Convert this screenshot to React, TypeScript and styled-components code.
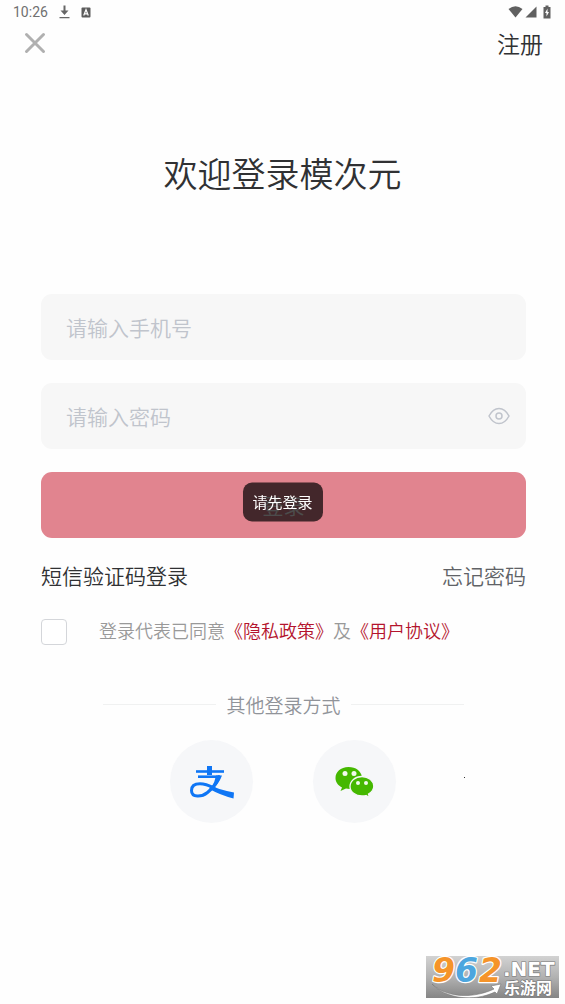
import React, { useState } from "react";
import styled, { createGlobalStyle } from "styled-components";

const GlobalStyle = createGlobalStyle`
  *, *::before, *::after { box-sizing: border-box; }
  body {
    margin: 0;
    background: #fefefe;
    color: #303133;
    font-family: "Noto Sans CJK SC", sans-serif;
    font-weight: 350;
  }
  button, input { font-family: inherit; font-weight: inherit; }
`;

const Page = styled.main`
  position: relative;
  min-height: 100vh;
  display: flex;
  flex-direction: column;
`;

const StatusBar = styled.div`
  height: 24px;
  padding: 0 13px;
  display: flex;
  align-items: center;
  justify-content: space-between;
`;

const StatusGroup = styled.div<{ $gap: number }>`
  display: flex;
  align-items: center;
  gap: ${(p) => p.$gap}px;
`;

const Clock = styled.time`
  font: 400 14px/24px Roboto, sans-serif;
  color: #707070;
`;

const NavBar = styled.nav`
  height: 38px;
  padding: 0 22px 0 24px;
  display: flex;
  align-items: center;
  justify-content: space-between;
`;

const PlainButton = styled.button`
  padding: 0;
  border: 0;
  background: none;
  display: flex;
  cursor: pointer;
`;

const TextLink = styled.a<{ $size: number; $color: string }>`
  font-size: ${(p) => p.$size}px;
  color: ${(p) => p.$color};
  text-decoration: none;
`;

const Title = styled.h1`
  margin: 86px 0 96px;
  text-align: center;
  font-size: 34px;
  line-height: 50px;
  font-weight: inherit;
`;

const Form = styled.form`
  padding: 0 39px 0 41px;
  display: flex;
  flex-direction: column;
`;

const Field = styled.label`
  height: 66px;
  margin-bottom: 23px;
  padding: 0 16px 0 25px;
  display: flex;
  align-items: center;
  border-radius: 11px;
  background: #f7f7f7;
`;

const TextInput = styled.input`
  flex: 1;
  min-width: 0;
  height: 40px;
  padding: 0;
  border: 0;
  outline: 0;
  background: none;
  color: #303133;
  font-size: 21px;
  &::placeholder { color: #c0c4cc; opacity: 1; }
`;

const SubmitButton = styled.button`
  height: 66px;
  border: 0;
  border-radius: 11px;
  background: #e1848f;
  color: #fff;
  font-size: 21px;
  cursor: pointer;
`;

const LinkRow = styled.div`
  margin-top: 21px;
  height: 32px;
  display: flex;
  align-items: center;
  justify-content: space-between;
`;

const Consent = styled.div`
  margin-top: 25px;
  height: 32px;
  display: flex;
  align-items: center;
  gap: 32px;
  white-space: nowrap;
  font-size: 18px;
  color: #999;
`;

const ConsentText = styled.div`
  padding-bottom: 4px;
`;

const CheckBox = styled.input`
  appearance: none;
  flex: none;
  width: 26px;
  height: 26px;
  margin: 0;
  border: 1px solid #d4d6da;
  border-radius: 4px;
  background: #fff;
  &:checked { background: #b4142d; }
`;

const Divider = styled.div`
  margin-top: 40px;
  padding: 0 39px 0 41px;
  height: 32px;
  display: flex;
  align-items: center;
  justify-content: center;
  gap: 10px;
  font-size: 19px;
  color: #909399;
  &::before, &::after {
    content: "";
    flex: 0 1 113px;
    height: 1px;
    background: #f0f1f1;
  }
`;

const Methods = styled.div`
  position: relative;
  align-self: center;
  margin-top: 20px;
  display: flex;
  gap: 60px;
`;

const MethodButton = styled.button`
  width: 83px;
  height: 83px;
  padding: 0;
  border: 0;
  border-radius: 50%;
  background: #f6f7f9;
  display: grid;
  place-items: center;
  cursor: pointer;
`;

const Speck = styled.span`
  position: absolute;
  top: 37px;
  left: 294px;
  width: 1px;
  height: 1px;
  background: #333;
`;

const Toast = styled.div`
  position: fixed;
  top: 50%;
  left: 50%;
  transform: translate(-50%, -50%);
  padding: 7px 10px 9px;
  border-radius: 9px;
  background: rgba(0, 0, 0, 0.7);
  color: #fff;
  font-size: 15px;
  font-weight: 400;
  line-height: 23px;
  white-space: nowrap;
`;

const Watermark = styled.div`
  position: absolute;
  right: 6px;
  bottom: 6px;
  display: flex;
`;

function SiteLogo() {
  return (
    <svg width="133" height="52" viewBox="0 -8 133 52" role="img" aria-label="962.NET 乐游网">
      <defs>
        <linearGradient id="plate" x1="0" y1="0" x2="0" y2="1">
          <stop offset="0" stopColor="#d2d2d2" />
          <stop offset="0.5" stopColor="#b2b2b2" />
          <stop offset="1" stopColor="#858585" />
        </linearGradient>
      </defs>
      <rect y="2" width="133" height="42" fill="url(#plate)" />
      <path d="M6 30C22 45 49 44 68 35L65 32L75 30L71 40L69 38C48 48 20 45 6 30Z" fill="#fff" stroke="#777" strokeWidth="0.6" />
      <g
        fontFamily={'"DejaVu Sans", sans-serif'}
        fontWeight="700"
        fontStyle="italic"
        fontSize="33"
        stroke="#fff"
        strokeWidth="2.4"
        paintOrder="stroke"
        strokeLinejoin="round"
      >
        <text x="6" y="28" fill="#f5942a">9</text>
        <text x="29" y="28" fill="#4da6de">6</text>
        <text x="53" y="28" fill="#f5942a">2</text>
      </g>
      <g fill="#fff" stroke="#777" strokeWidth="1.2" paintOrder="stroke" fontWeight="700">
        <text x="77" y="22" fontFamily={'"DejaVu Sans", sans-serif'} fontSize="20">.NET</text>
        <text x="78" y="40" fontFamily={'"Noto Sans CJK SC", sans-serif'} fontSize="16">乐游网</text>
      </g>
    </svg>
  );
}

function AlipayMark() {
  return (
    <svg width="45" height="34" viewBox="1 0 45 34" aria-hidden="true">
      <g fill="none" stroke="#0f76f5">
        <path d="M21.500 1V10" strokeWidth="5" />
        <path d="M8 6.500H36" strokeWidth="2.600" />
        <path d="M10 11.700H32" strokeWidth="2.600" />
        <path d="M31.500 10.500C29.500 17.500 25 23 19.500 27.500C14 32 3.500 33 3.500 25.500C3.500 21 7 18.800 12 18.800C18 18.800 22 21 27 23.500" strokeWidth="3" />
      </g>
      <path d="M28 10.500H34C32 15.500 30 18.500 27.500 21.500L23 23Q27 17 28 10.500ZM22 20Q31 25 46 27.500L45.500 33.500Q32 30 21.500 24Z" fill="#0f76f5" />
    </svg>
  );
}

function WeChatMark() {
  return (
    <svg width="39" height="32" viewBox="1 0 39 32" aria-hidden="true">
      <path d="M14.500 1C6.500 1 1.500 6 1.500 12C1.500 16 3.500 19 8 21.500L6.500 25L12 22.500Q15 23.300 18 22.800C28 22 28 12 28 11C27 5 22 1 14.500 1Z" fill="#45b800" />
      <path d="M28 10.500C21 10.500 16 15 16 20.500C16 26 21.500 30 28 30Q30.500 30 32 29.500L35.500 31.500L34.500 28Q39.800 25 39.800 20C39.500 15 34.500 10.500 28 10.500Z" fill="#45b800" stroke="#f6f7f9" strokeWidth="1.300" />
      <g fill="#f1faec">
        <circle cx="11" cy="7.500" r="2.500" />
        <circle cx="20" cy="7.500" r="2.500" />
        <circle cx="24" cy="17" r="2" />
        <circle cx="32" cy="17" r="2" />
      </g>
    </svg>
  );
}

export default function App() {
  const [visible, setVisible] = useState(false);
  return (
    <Page>
      <GlobalStyle />
      <StatusBar>
        <StatusGroup $gap={11}>
          <Clock>10:26</Clock>
          <svg width="11" height="14" viewBox="0 0 11 14" aria-hidden="true">
            <path d="M4.500 0.500H6.500V5.500H9.500L5.500 10L1.500 5.500H4.500ZM0.500 12H10.500V13.300H0.500Z" fill="#666" />
          </svg>
          <svg width="10" height="11" viewBox="0 0 10 11" aria-hidden="true">
            <rect x="0.500" y="0.500" width="9" height="10" rx="1" fill="#5c5c5c" />
            <path d="M2.700 8.500L5 2.700L7.300 8.500M3.500 6.800H6.500" fill="none" stroke="#fff" strokeWidth="1.200" />
          </svg>
        </StatusGroup>
        <StatusGroup $gap={2}>
          <svg width="15" height="12" viewBox="0 0 15 12" aria-hidden="true">
            <path d="M0.500 3Q7.500 -2.500 14.500 3L7.500 11.500Z" fill="#606060" />
          </svg>
          <svg width="12" height="12" viewBox="0 0 12 12" aria-hidden="true">
            <path d="M11.500 0.500V11.500H0.500Z" fill="#606060" />
          </svg>
          <svg width="13" height="14" viewBox="0 0 13 14" aria-hidden="true">
            <path d="M6.500 0.500H9.500V2H11.500V13.500H4.500V2H6.500Z" fill="#606060" />
            <path d="M8.500 3.500L6 8H7.500V11.500L10 7H8.500Z" fill="#fff" />
          </svg>
        </StatusGroup>
      </StatusBar>

      <NavBar>
        <PlainButton type="button" aria-label="关闭">
          <svg width="22" height="22" viewBox="0 0 22 22" aria-hidden="true">
            <path d="M2.500 2.500L19.500 19.500M19.500 2.500L2.500 19.500" stroke="#b0b0b0" strokeWidth="3" strokeLinecap="round" />
          </svg>
        </PlainButton>
        <TextLink href="#register" $size={23} $color="#303133">注册</TextLink>
      </NavBar>

      <Title>欢迎登录模次元</Title>

      <Form onSubmit={(e) => e.preventDefault()}>
        <Field>
          <TextInput type="tel" placeholder="请输入手机号" aria-label="手机号" />
        </Field>
        <Field>
          <TextInput type={visible ? "text" : "password"} placeholder="请输入密码" aria-label="密码" />
          <PlainButton type="button" aria-label="显示密码" onClick={() => setVisible(!visible)}>
            <svg width="22" height="18" viewBox="0 0 22 18" fill="none" stroke="#c0c4cc" strokeWidth="1.500" aria-hidden="true">
              <path d="M1 9Q5 1.500 11 1.500T21 9Q17 16.500 11 16.500T1 9Z" />
              <circle cx="11" cy="9" r="3" />
            </svg>
          </PlainButton>
        </Field>
        <SubmitButton type="submit">登录</SubmitButton>
        <LinkRow>
          <TextLink href="#sms" $size={21} $color="#303133">短信验证码登录</TextLink>
          <TextLink href="#forgot" $size={21} $color="#606266">忘记密码</TextLink>
        </LinkRow>
        <Consent>
          <CheckBox type="checkbox" id="agree" />
          <ConsentText>
            <label htmlFor="agree">登录代表已同意</label>
            <TextLink href="#privacy" $size={18} $color="#b4142d">《隐私政策》</TextLink>
            及
            <TextLink href="#terms" $size={18} $color="#b4142d">《用户协议》</TextLink>
          </ConsentText>
        </Consent>
      </Form>

      <Divider>其他登录方式</Divider>
      <Methods>
        <MethodButton type="button" aria-label="支付宝登录"><AlipayMark /></MethodButton>
        <MethodButton type="button" aria-label="微信登录"><WeChatMark /></MethodButton>
        <Speck />
      </Methods>

      <Toast role="status">请先登录</Toast>
      <Watermark><SiteLogo /></Watermark>
    </Page>
  );
}
